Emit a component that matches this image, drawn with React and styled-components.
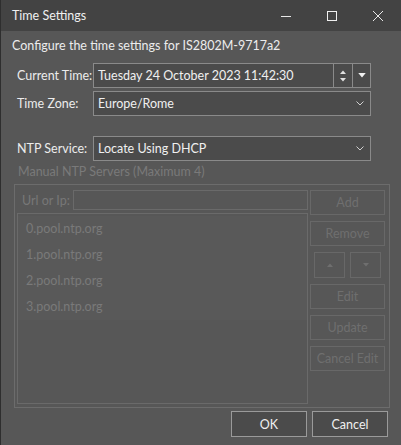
import React from "react";
import styled, { createGlobalStyle } from "styled-components";

const Global = createGlobalStyle`
  html, body { margin: 0; padding: 0; background: #575757; }
  body { font-family: Lato, "Noto Sans", sans-serif; font-size: 12.5px; line-height: 1.2; }
`;

const Window = styled.div`
  width: 400px;
  height: 445px;
  background: #575757;
  border-left: 1px solid #2e2e2e;
  display: flex;
  flex-direction: column;
  color: #ececec;
  overflow: hidden;
`;

const TitleBar = styled.div`
  height: 31px;
  flex: none;
  background: #434343;
  display: flex;
  align-items: center;
  padding-left: 11px;
`;

const Title = styled.div`
  flex: 1;
  color: #f0f0f0;
`;

const CaptionButton = styled.div`
  width: 46px;
  height: 31px;
  display: flex;
  align-items: center;
  justify-content: center;
`;

const Body = styled.div`
  display: flex;
  flex-direction: column;
  padding: 6px 12px 0 11px;
`;

const Description = styled.div`
  height: 18px;
  line-height: 18px;
  margin-bottom: 8px;
  white-space: nowrap;
`;

const FormRow = styled.div`
  display: flex;
  align-items: center;
  height: 25px;
  margin-top: ${(p) => p.$gap || 0}px;
  padding-left: 5px;
`;

const Label = styled.div`
  width: 76px;
  flex: none;
  white-space: nowrap;
`;

const Field = styled.div`
  width: 278px;
  height: 25px;
  box-sizing: border-box;
  border: 1px solid #8a8a8a;
  background: #4b4b4b;
  display: flex;
  align-items: stretch;
`;

const FieldText = styled.div`
  flex: 1;
  padding-left: 4px;
  display: flex;
  align-items: center;
  color: #f0f0f0;
  white-space: nowrap;
`;

const SideBox = styled.div`
  width: ${(p) => p.$w}px;
  border-left: 1px solid #8a8a8a;
  display: flex;
  flex-direction: column;
  align-items: center;
  justify-content: center;
  gap: 4px;
`;

const Chevron = styled.div`
  width: 20px;
  display: flex;
  align-items: center;
  justify-content: center;
`;

const DisabledHeading = styled.div`
  color: #7a7a7a;
  padding-left: 6px;
  margin-top: 2px;
  height: 17px;
  line-height: 17px;
  white-space: nowrap;
`;

const Group = styled.div`
  margin-top: 4px;
  margin-left: 2px;
  width: 376px;
  height: 224px;
  flex: none;
  box-sizing: border-box;
  border: 1px solid #6c6c6c;
  display: flex;
  padding: 5px 4px 3px 2px;
  gap: 2px;
`;

const LeftCol = styled.div`
  width: 291px;
  display: flex;
  flex-direction: column;
`;

const UrlRow = styled.div`
  display: flex;
  align-items: center;
  height: 20px;
  padding-left: 5px;
  color: #777;
  white-space: nowrap;
`;

const UrlInput = styled.div`
  margin-left: 3px;
  flex: 1;
  height: 20px;
  box-sizing: border-box;
  border: 1px solid #6a6a6a;
`;

const ListBox = styled.div`
  margin-top: 3px;
  flex: 1;
  border: 1px solid #6a6a6a;
  box-sizing: border-box;
  padding-top: 2px;
`;

const ListItems = styled.div`
  background: #595959;
  display: flex;
  flex-direction: column;
`;

const ListItem = styled.div`
  height: 26px;
  line-height: 26px;
  padding-left: 8px;
  color: #7a7a7a;
`;

const RightCol = styled.div`
  width: 75px;
  display: flex;
  flex-direction: column;
  gap: 6px;
`;

const DisabledButton = styled.div`
  height: 25px;
  flex: none;
  box-sizing: border-box;
  border: 1px solid #686868;
  display: flex;
  align-items: center;
  justify-content: center;
  color: #6f6f6f;
  white-space: nowrap;
`;

const ArrowRow = styled.div`
  display: flex;
  justify-content: space-between;
  padding: 0 4px;
  height: 26px;
`;

const ArrowButton = styled(DisabledButton)`
  width: 31px;
  height: 26px;
`;

const Footer = styled.div`
  display: flex;
  justify-content: flex-end;
  gap: 5px;
  margin-top: 3px;
  padding-right: 1px;
`;

const DialogButton = styled.div`
  width: 76px;
  height: 26px;
  box-sizing: border-box;
  border: 1px solid #9a9a9a;
  background: #4b4b4b;
  display: flex;
  align-items: center;
  justify-content: center;
  color: #f0f0f0;
`;

const ChevronIcon = () => (
  <svg width="8" height="5" viewBox="0 0 8 5">
    <path d="M0.5 0.5 L4 4 L7.5 0.5" fill="none" stroke="#d0d0d0" strokeWidth="1" />
  </svg>
);

const TriUp = ({ c = "#e0e0e0", w = 6 }) => (
  <svg width={w} height={w / 2 + 1} viewBox="0 0 6 4">
    <path d="M0 4 L3 0.5 L6 4 Z" fill={c} />
  </svg>
);
const TriDown = ({ c = "#e0e0e0", w = 6 }) => (
  <svg width={w} height={w / 2 + 1} viewBox="0 0 6 4">
    <path d="M0 0 L3 3.5 L6 0 Z" fill={c} />
  </svg>
);

export default function App() {
  return (
    <>
      <Global />
      <Window>
        <TitleBar>
          <Title>Time Settings</Title>
          <CaptionButton>
            <svg width="10" height="10" viewBox="0 0 10 10">
              <path d="M0 5.5 H10" stroke="#e8e8e8" strokeWidth="1" />
            </svg>
          </CaptionButton>
          <CaptionButton>
            <svg width="10" height="10" viewBox="0 0 10 10">
              <rect x="0.5" y="0.5" width="9" height="9" fill="none" stroke="#f0f0f0" strokeWidth="1" />
            </svg>
          </CaptionButton>
          <CaptionButton>
            <svg width="10" height="10" viewBox="0 0 10 10">
              <path d="M0 0 L10 10 M10 0 L0 10" stroke="#e8e8e8" strokeWidth="1" />
            </svg>
          </CaptionButton>
        </TitleBar>
        <Body>
          <Description>Configure the time settings for IS2802M-9717a2</Description>
          <FormRow>
            <Label>Current Time:</Label>
            <Field>
              <FieldText>Tuesday 24 October 2023 11:42:30</FieldText>
              <SideBox $w={18}>
                <TriUp />
                <TriDown />
              </SideBox>
              <SideBox $w={17}>
                <TriDown w={8} c="#f0f0f0" />
              </SideBox>
            </Field>
          </FormRow>
          <FormRow $gap={3}>
            <Label>Time Zone:</Label>
            <Field>
              <FieldText>Europe/Rome</FieldText>
              <Chevron><ChevronIcon /></Chevron>
            </Field>
          </FormRow>
          <FormRow $gap={20}>
            <Label>NTP Service:</Label>
            <Field>
              <FieldText>Locate Using DHCP</FieldText>
              <Chevron><ChevronIcon /></Chevron>
            </Field>
          </FormRow>
          <DisabledHeading>Manual NTP Servers (Maximum 4)</DisabledHeading>
          <Group>
            <LeftCol>
              <UrlRow>
                Url or Ip:
                <UrlInput />
              </UrlRow>
              <ListBox>
                <ListItems>
                  {["0.pool.ntp.org", "1.pool.ntp.org", "2.pool.ntp.org", "3.pool.ntp.org"].map((s) => (
                    <ListItem key={s}>{s}</ListItem>
                  ))}
                </ListItems>
              </ListBox>
            </LeftCol>
            <RightCol>
              <DisabledButton>Add</DisabledButton>
              <DisabledButton>Remove</DisabledButton>
              <ArrowRow>
                <ArrowButton><TriUp c="#6f6f6f" /></ArrowButton>
                <ArrowButton><TriDown c="#6f6f6f" /></ArrowButton>
              </ArrowRow>
              <DisabledButton>Edit</DisabledButton>
              <DisabledButton>Update</DisabledButton>
              <DisabledButton>Cancel Edit</DisabledButton>
            </RightCol>
          </Group>
          <Footer>
            <DialogButton>OK</DialogButton>
            <DialogButton>Cancel</DialogButton>
          </Footer>
        </Body>
      </Window>
    </>
  );
}
